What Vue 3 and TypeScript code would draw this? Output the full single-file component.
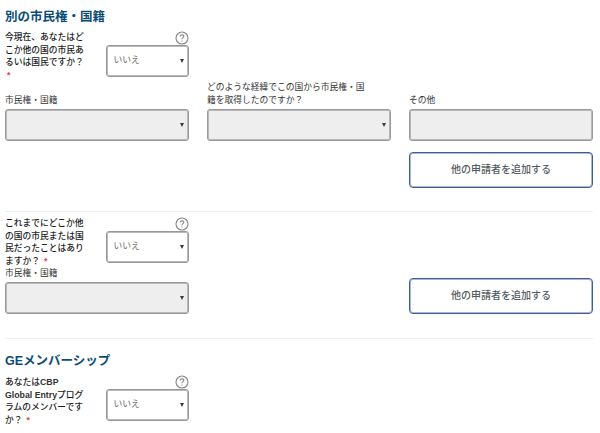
<script setup lang="ts">
interface Field {
  label: string
  kind: 'select' | 'text'
}
interface Section {
  id: string
  title?: string
  lines: string[]
  fields: Field[]
  action?: string
}

const sections: Section[] = [
  {
    id: 'current',
    title: '別の市民権・国籍',
    lines: ['今現在、あなたはど', 'こか他の国の市民あ', 'るいは国民ですか？', ''],
    fields: [
      { label: '市民権・国籍', kind: 'select' },
      { label: 'どのような経緯でこの国から市民権・国籍を取得したのですか？', kind: 'select' },
      { label: 'その他', kind: 'text' },
    ],
    action: '他の申請者を追加する',
  },
  {
    id: 'past',
    lines: ['これまでにどこか他', 'の国の市民または国', '民だったことはあり', 'ますか？'],
    fields: [{ label: '市民権・国籍', kind: 'select' }],
    action: '他の申請者を追加する',
  },
  {
    id: 'member',
    title: 'GEメンバーシップ',
    lines: ['あなたはCBP', 'Global Entryプログ', 'ラムのメンバーです', 'か？'],
    fields: [],
  },
]

// Latin runs are set bolder than the Japanese around them.
function runs(line: string): { text: string; latin: boolean }[] {
  return line
    .split(/([A-Za-z ]+)/)
    .filter((t) => t !== '')
    .map((text) => ({ text, latin: /[A-Za-z]/.test(text) }))
}
</script>

<template>
  <main class="form">
    <section v-for="s in sections" :key="s.id" :class="['section', s.id]">
      <h2 v-if="s.title" class="title">{{ s.title }}</h2>
      <div class="question">
        <div class="prompt">
          <div v-for="(line, i) in s.lines" :key="i" class="line"><span v-for="(r, j) in runs(line)" :key="j" :class="{ latin: r.latin }">{{ r.text }}</span><span v-if="i === s.lines.length - 1" :class="['required', { alone: !line }]">*</span></div>
        </div>
        <div class="answer">
          <svg class="help" viewBox="0 0 14 14" aria-hidden="true">
            <circle cx="7" cy="7" r="6" />
            <path d="M5.2 5.5C5.3 3.3 8.9 3.4 8.8 5.4C8.7 6.7 7 6.6 7 8.3M7 9.4V10.4" />
          </svg>
          <div class="box choice"><span>いいえ</span><i class="arrow" /></div>
        </div>
      </div>
      <div v-if="s.action" class="grid">
        <div v-for="f in s.fields" :key="f.label" class="field">
          <label class="label">{{ f.label }}</label>
          <div class="box disabled"><i v-if="f.kind === 'select'" class="arrow" /></div>
        </div>
        <button class="add" type="button">{{ s.action }}</button>
      </div>
    </section>
  </main>
</template>

<style>
body {
  margin: 0;
  background: #fff;
  overflow: hidden;
}
</style>

<style scoped>
.form {
  box-sizing: border-box;
  width: 600px;
  height: 433px;
  padding: 0 7px 0 5px;
  font-family: "Liberation Sans", "Noto Sans CJK JP", sans-serif;
  font-size: 8.75px;
  line-height: 12.5px;
  color: #1c1c1c;
}
.section {
  box-sizing: border-box;
}
.current {
  height: 212px;
  padding-top: 7px;
  border-bottom: 1px solid #eee;
}
.past {
  height: 127px;
  padding-top: 5px;
  border-bottom: 1px solid #eee;
}
.member {
  padding-top: 12px;
}
.title {
  margin: 0 0 4px;
  font-size: 12.5px;
  line-height: 20px;
  font-weight: 700;
  color: #0b4d75;
}
.member .title {
  margin-bottom: 5px;
}
.question {
  display: flex;
  height: 50px;
}
.past .question {
  height: 49.5px;
}
.prompt {
  width: 100.5px;
  font-weight: 500;
  white-space: nowrap;
}
.line {
  height: 12.5px;
}
.latin {
  font-weight: 700;
  font-size: 8.75px;
  color: #333;
}
.required {
  margin-left: 4px;
  font-weight: 700;
  color: #e0434f;
}
.required.alone {
  margin-left: 2px;
}
.answer {
  width: 83px;
  display: flex;
  flex-direction: column;
  align-items: flex-end;
}
.help {
  width: 14px;
  height: 14px;
  flex: none;
  fill: none;
  stroke: #858585;
  stroke-width: 1.1;
}
.member .help {
  margin-top: -1px;
}
.box {
  box-sizing: border-box;
  width: 100%;
  height: 32px;
  flex: none;
  border: 1px solid #999;
  box-shadow: inset 0 0 0 1px #b9b9b9;
  border-radius: 3px;
  display: flex;
  align-items: center;
  padding: 0 4px 0 7px;
}
.choice {
  color: #6a6a6a;
  background: #fff;
}
.choice span {
  padding-bottom: 2px;
}
.disabled {
  background: #eee;
}
.arrow {
  margin-left: auto;
  border: 2px solid transparent;
  border-top: 4px solid #3a3a3a;
  border-bottom: 0;
}
.grid {
  display: grid;
  grid-template-columns: repeat(2, 183.5px) 184px;
  column-gap: 18.5px;
  row-gap: 11px;
  align-items: end;
}
.field {
  display: flex;
  flex-direction: column;
  gap: 3px;
}
.past .field {
  gap: 3px;
}
.label {
  width: 160px;
  color: #333;
}
.add {
  box-sizing: border-box;
  grid-column: 3;
  height: 36px;
  padding: 0;
  border: 1px solid #3f5f8d;
  box-shadow: inset 0 0 0 1px #aab9cf;
  border-radius: 4px;
  background: #fff;
  font: 500 10px/14px "Liberation Sans", "Noto Sans CJK JP", sans-serif;
  color: #555b62;
}
</style>
